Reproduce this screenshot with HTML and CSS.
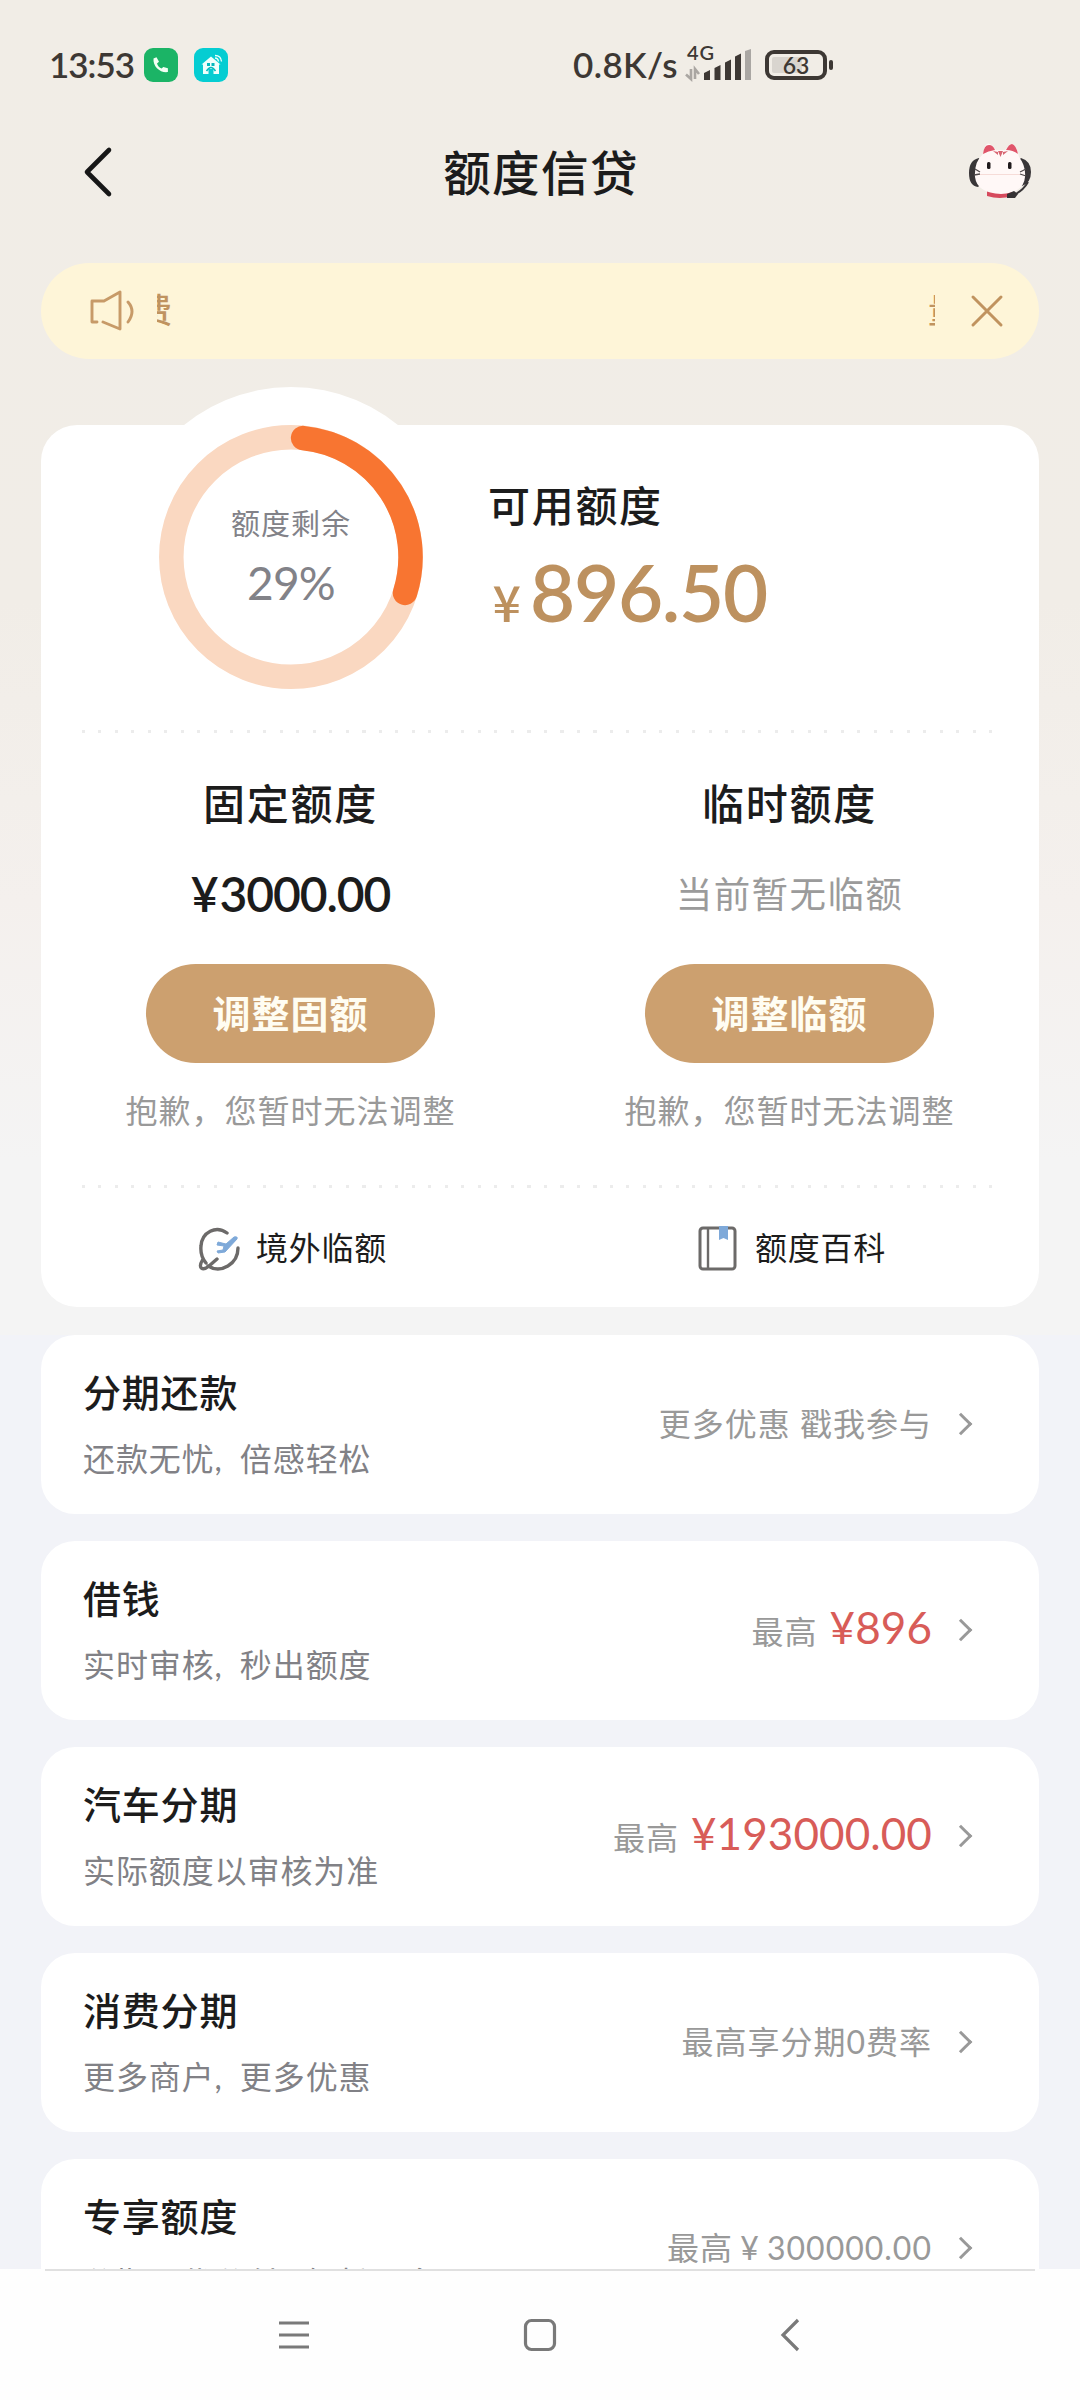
FILE: index.html
```html
<!DOCTYPE html>
<html lang="zh-CN">
<head>
<meta charset="utf-8">
<title>额度信贷</title>
<link rel="stylesheet" href="styles.css">
</head>
<body>
<div class="screen">
  <header class="status">
    <span class="clock">13:53</span>
    <svg class="app-phone" width="34" height="34" viewBox="0 0 34 34"><rect width="34" height="34" rx="9" fill="#1bb466"/><path d="M9.5 10.5l3-1.3 2.5 4.6-2 1.6c.8 2.500 2.500 4.200 4.600 5l1.700-1.300 4.600 1.200v3.800c-7.500 1.200-15.200-5.500-14.400-13.600z" fill="#f3fff4"/></svg>
    <svg class="app-home" width="34" height="34" viewBox="0 0 34 34"><rect width="34" height="34" rx="9" fill="#05cdd2"/><path d="M17 8.500L7.500 16.500H9V26H14.500V21H19.500V26H25V16.500H26.500Z" fill="#effffb"/><path d="M13 15h3v3h-3zM17.500 15h3v3h-3z" fill="#05b9bd"/><path d="M12.500 23q4.500-7 9 0" fill="none" stroke="#05b9bd" stroke-width="1.500"/><path d="M21 10q3 0 3.500 3.500M21 7.500q6 0 6.500 6" fill="none" stroke="#effffb" stroke-width="1.300"/></svg>
    <span class="rate">0.8K/s</span>
    <span class="signal">
      <span class="net">4G</span>
      <svg width="68" height="34" viewBox="0 0 68 34"><path d="M6 21v10L1 26.500M10 31V21l4 5" fill="none" stroke="#aaa6a2" stroke-width="2.600"/><g fill="#3d3834"><path d="M19 25l6-3v10h-6zM29.500 20l6-3v15h-6zM40 14.500l6-3V32h-6zM50 8.500l6-3V32h-6z"/></g><path d="M60 3l6-2v31h-6z" fill="#aaa7a3"/></svg>
    </span>
    <span class="battery"><span class="charge"></span><span class="level">63</span></span><i class="tip"></i>
  </header>

  <nav class="topbar">
    <svg class="back" width="34" height="56" viewBox="0 0 34 56"><path d="M28 6L6 28L28 50" fill="none" stroke="#171717" stroke-width="4.600" stroke-linecap="round" stroke-linejoin="round"/></svg>
    <h1>额度信贷</h1>
    <svg class="cat" width="64" height="60" viewBox="0 0 64 60">
      <path d="M11 18Q1 20 1 33T10 47L15 42V22zM53 18q10 3 10 14t-9 14L49 42V22z" fill="#393638"/>
      <path d="M60 42Q55 51 44 56" fill="none" stroke="#393638" stroke-width="2"/>
      <path d="M19 50q13 5 25 0v6q-12 4-25 0z" fill="#d64a5d"/>
      <path d="M15 14Q17 1 22 4l6 6h9l6-6q5-1 8 13 7 9 6 20-1 16-24 17Q9 53 7 37 6 22 15 14z" fill="#fff8f7"/>
      <path d="M15 14q1-9 6-9 4 0 6 5-7 1-12 4zM38 10q3-6 6-6 4 1 6 10-5-4-12-4z" fill="#e0556a"/>
      <path d="M25 11l5 1v3zM30 11h5l-2.500 6zM40 11l-5 1v3z" fill="#d86572"/>
      <rect x="19" y="22" width="3.500" height="7" rx="1.500" fill="#201b1d"/><rect x="40" y="22" width="3.500" height="7" rx="1.500" fill="#201b1d"/>
      <path d="M12 34.500h40" stroke="#f6dcd8" stroke-width="1.200"/><path d="M7 29l5 3M6 35l6-1M52 32l6-3M52 34l6 2" stroke="#514b4c" stroke-width="1.300"/>
      <path d="M39 54l7-3 4 3-3 4h-8z" fill="#353234"/>
    </svg>
  </nav>

  <section class="notice">
    <svg width="46" height="44" viewBox="0 0 46 44"><path d="M8 33H3V12H15L31 3V40L14 33M39 13Q47 22 39 33" fill="none" stroke="#c79a68" stroke-width="2.900" stroke-linecap="round" stroke-linejoin="round"/></svg>
    <div class="marquee"><span class="out">费</span><span class="in">量</span></div>
    <svg class="close" width="34" height="34" viewBox="0 0 34 34"><path d="M3 3L31 31M31 3L3 31" stroke="#c0935f" stroke-width="3" stroke-linecap="round"/></svg>
  </section>

  <main>
    <section class="quota">
      <div class="bump"></div>
      <div class="summary">
        <div class="ring">
          <svg width="264" height="264" viewBox="0 0 264 264"><circle cx="132" cy="132" r="119.700" fill="none" stroke="#fad8c1" stroke-width="24.500"/><path d="M144.100 13.100A119.500 119.500 0 0 1 246 167.900" fill="none" stroke="#f87531" stroke-width="24.500" stroke-linecap="round"/></svg>
          <div class="ring-text"><span>额度剩余</span><b>29%</b></div>
        </div>
        <div class="available"><h2>可用额度</h2><p><small>¥</small>896.50</p></div>
      </div>
      <div class="dots"></div>
      <div class="columns">
        <div class="column"><h2>固定额度</h2><p class="amount"><span>¥</span>3000.00</p><button>调整固额</button><p class="hint">抱歉，您暂时无法调整</p></div>
        <div class="column"><h2>临时额度</h2><p class="none">当前暂无临额</p><button>调整临额</button><p class="hint">抱歉，您暂时无法调整</p></div>
      </div>
      <div class="dots"></div>
      <div class="links">
        <a><svg width="46" height="46" viewBox="0 0 46 46"><path d="M31 8C20 0 6 7 5 21Q4 31 10 38M42 23C42 39 25 49 12 41M7 34C1 44 7 46 13 41L21 34" fill="none" stroke="#6c6a69" stroke-width="3.400" stroke-linecap="round" stroke-linejoin="round"/><path d="M22 17l8 2 8-7q4-1 3 2l-12 13-7 1-1-2 6-1 1-4-7-1z" fill="#7ea9d9" stroke="#7ea9d9" stroke-linejoin="round"/></svg><span>境外临额</span></a>
        <a><svg width="46" height="46" viewBox="0 0 46 46"><rect x="5" y="3" width="35" height="41" rx="3" fill="none" stroke="#6c6a69" stroke-width="3"/><path d="M13 3V44" stroke="#6c6a69" stroke-width="2.400"/><path d="M24 1h9v14l-4.500-2-4.500 2z" fill="#7ea9d9"/></svg><span>额度百科</span></a>
      </div>
    </section>

    <section class="item"><div class="copy"><h3>分期还款</h3><p>还款无忧, 倍感轻松</p></div><div class="more">更多优惠 戳我参与</div><i class="arrow"></i></section>
    <section class="item"><div class="copy"><h3>借钱</h3><p>实时审核, 秒出额度</p></div><div class="more">最高<em>¥896</em></div><i class="arrow"></i></section>
    <section class="item"><div class="copy"><h3>汽车分期</h3><p>实际额度以审核为准</p></div><div class="more">最高<em>¥193000.00</em></div><i class="arrow"></i></section>
    <section class="item"><div class="copy"><h3>消费分期</h3><p>更多商户, 更多优惠</p></div><div class="more">最高享分期0费率</div><i class="arrow"></i></section>
    <section class="item"><div class="copy"><h3>专享额度</h3><p>分期更优分付, 轻松更多</p></div><div class="more tight">最高 ¥ 300000.00</div><i class="arrow"></i></section>
  </main>

  <footer class="system">
    <svg width="34" height="34" viewBox="0 0 34 34"><path d="M2 5h30M2 17h30M2 29h30" stroke="#797979" stroke-width="3"/></svg>
    <svg width="34" height="34" viewBox="0 0 34 34"><rect x="2.500" y="2.500" width="29" height="29" rx="6" fill="none" stroke="#797979" stroke-width="3.200"/></svg>
    <svg width="34" height="34" viewBox="0 0 34 34"><path d="M25 2L10 17L25 32" fill="none" stroke="#797979" stroke-width="3.200"/></svg>
  </footer>
</div>
</body>
</html>
```

FILE: styles.css
```css
* { box-sizing: border-box; }
body { margin: 0; font-family: Lato, "Noto Sans CJK SC", sans-serif; color: #1c1c1c; }
h1, h2, h3, p { margin: 0; font-weight: 500; white-space: nowrap; }
svg { flex: none; display: block; }

.screen {
  width: 1080px;
  height: 2400px;
  overflow: hidden;
  display: flex;
  flex-direction: column;
  background: linear-gradient(#f1ede6 0, #f1ede7 600px, #f4f0ed 900px, #f4f4f4 1160px, #f4f4f4 1335px, #f2f3f8 1335px);
}

.status { height: 129px; flex: none; display: flex; align-items: center; padding-left: 49px; color: #3d3834; font-weight: 600; }
.clock { width: 95px; font-size: 35px; line-height: 40px; letter-spacing: -1px; margin-top: -2px; }
.app-home { margin-left: 16px; }
.rate { margin-left: 345px; width: 112px; font-size: 35px; line-height: 40px; letter-spacing: .4px; margin-top: -2px; }
.signal { position: relative; width: 68px; height: 34px; }
.net { position: absolute; left: 2px; top: -8px; font-size: 20px; line-height: 24px; letter-spacing: .8px; }
.battery { position: relative; margin-left: 12px; width: 62px; height: 30px; border: 4px solid #3d3834; border-radius: 9px; }
.charge { position: absolute; left: 3px; top: 3px; width: 30px; height: 16px; background: #d9d5cf; border-radius: 2px; }
.level { position: relative; display: block; text-align: center; font-size: 23px; line-height: 22px; }
.tip { width: 4px; height: 10px; margin-left: 2px; border-radius: 2px; background: #3d3834; }

.topbar { height: 134px; flex: none; display: flex; justify-content: space-between; padding: 15px 48px 0 81px; }
h1 { font-size: 47.500px; line-height: 58px; letter-spacing: 1.400px; margin-left: -1px; }
.cat { margin-top: -4px; }

.notice { flex: none; height: 96px; margin: 0 41px; padding: 0 35px 0 48px; border-radius: 48px; background: #fef5d8; display: flex; align-items: center; color: #c0935f; font-weight: 500; }
.marquee { flex: none; width: 778px; margin-left: 22px; height: 50px; overflow: hidden; display: flex; justify-content: space-between; font-size: 34px; line-height: 48px; }
.out { margin-left: -19px; }
.in { margin-right: -27px; }
.close { margin-left: 35px; }

main { flex: 1; min-height: 0; overflow: hidden; padding-top: 66px; display: flex; flex-direction: column; gap: 27px; margin: 0 41px; }
.quota { flex: none; position: relative; height: 882px; border-radius: 36px; background: #fff; margin-bottom: 1px; }
.bump { position: absolute; left: 80px; top: -38px; width: 340px; height: 340px; border-radius: 50%; background: #fff; }
.summary { position: relative; height: 305px; display: flex; padding-left: 118px; }
.ring { position: relative; width: 264px; height: 264px; }
.ring-text { position: absolute; inset: 0; padding-top: 79px; display: flex; flex-direction: column; align-items: center; color: #828288; font-size: 29px; line-height: 40px; letter-spacing: 1px; }
.ring-text b { font-weight: 400; font-size: 46px; line-height: 50px; margin-top: 14px; letter-spacing: -.800px; }
h2 { font-size: 42px; line-height: 56px; letter-spacing: 1.700px; }
.available { margin-left: 65px; padding-top: 53px; }
.available p { color: #bd915f; font-size: 78px; line-height: 90px; font-weight: 600; letter-spacing: -1.300px; margin-top: 13px; }
.available small { font: 500 50px "Noto Sans CJK SC"; margin: 0 6px 0 0; display: inline-block; width: 36px; line-height: 60px; text-align: center; }
.dots { height: 3px; margin: 0 41px; background: repeating-linear-gradient(90deg, #ececec 0 3px, transparent 3px 16.500px); }
.columns { display: flex; height: 452px; }
.column { flex: 1; display: flex; flex-direction: column; align-items: center; padding-top: 43px; }
.amount, .none { height: 60px; line-height: 60px; margin-top: 32px; }
.amount { font-size: 48px; letter-spacing: -1.100px; font-weight: 600; }
.amount span { margin-right: 2px; }
.none { font-size: 36.500px; letter-spacing: 1.400px; color: #9b9b9b; font-weight: 400; }
button { width: 289px; height: 99px; margin: 40px 0 24px; padding: 0; border: 0; border-radius: 50px; background: #cca06f; color: #fffdf2; font: 700 38px/97px Lato, "Noto Sans CJK SC", sans-serif; letter-spacing: 1px; }
.hint { font-size: 32px; line-height: 48px; letter-spacing: 1px; color: #999; font-weight: 400; }
.links { display: flex; height: 118px; align-items: center; padding-top: 1px; }
.links a { flex: 1; display: flex; justify-content: center; align-items: center; gap: 14px; font-size: 32px; line-height: 46px; letter-spacing: .7px; padding-left: 2px; }

.item { flex: none; height: 179px; border-radius: 34px; background: #fff; padding: 0 70px 2px 42px; display: flex; align-items: center; }
.copy { flex: 1; }
h3 { font-size: 38px; line-height: 56px; letter-spacing: .8px; margin-top: -1px; }
.copy p { font-size: 32px; line-height: 46px; letter-spacing: .9px; word-spacing: 8px; margin-top: 16px; color: #818186; font-weight: 400; }
.more { color: #999; font-size: 32px; line-height: 60px; letter-spacing: 1px; white-space: nowrap; }
.tight { word-spacing: -2px; }
.more em { font-style: normal; color: #d85c58; font-size: 44px; margin-left: 12px; letter-spacing: .100px; font-weight: 400; }
.arrow { width: 16px; height: 16px; border: solid #999; border-width: 3px 3px 0 0; transform: rotate(45deg); margin-left: 21px; }

.system { flex: none; height: 131px; background: #fefefe; display: flex; align-items: flex-start; padding: 49px 0 0 277px; gap: 212px; position: relative; }
.system svg:last-child { margin-left: 4px; }
.system::before { content: ""; position: absolute; top: 0; left: 45px; right: 45px; height: 2px; background: #e0e0e0; }
```
